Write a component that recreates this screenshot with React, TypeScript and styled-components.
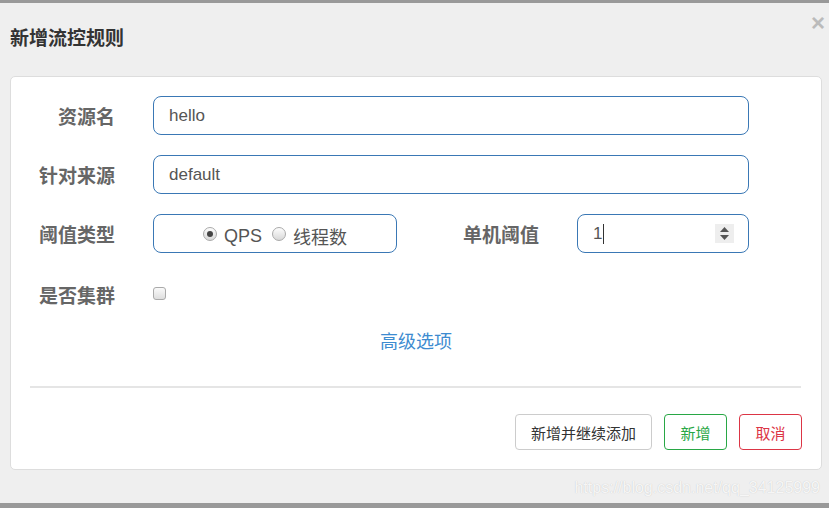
import React from "react";
import styled, { createGlobalStyle } from "styled-components";

const Global = createGlobalStyle`
  html, body { margin: 0; padding: 0; }
  body {
    background: #efefef;
    font-family: "Liberation Sans", "Noto Sans CJK SC", sans-serif;
  }
`;

const Page = styled.div`
  position: relative;
  height: 508px;
  box-sizing: border-box;
  border-top: 3px solid #999;
  border-bottom: 5px solid #999;
  background: #efefef;
  display: flex;
  flex-direction: column;
`;

const Header = styled.div`
  height: 73px;
  display: flex;
  justify-content: space-between;
  align-items: flex-start;
  padding: 0 4px 0 10px;
`;

const Title = styled.h4`
  margin: 22px 0 0;
  font-family: "Noto Sans CJK SC", sans-serif;
  font-size: 19px;
  font-weight: 700;
  color: #333;
  line-height: 24px;
`;

const Close = styled.span`
  margin-top: 8px;
  font-family: "Liberation Sans", sans-serif;
  font-size: 24px;
  font-weight: 700;
  color: #bbb;
  line-height: 24px;
`;

const Card = styled.div`
  margin: 0 7px 0 10px;
  height: 394px;
  box-sizing: border-box;
  background: #fff;
  border: 1px solid #ddd;
  border-radius: 5px;
  padding: 19px 0 0;
  display: flex;
  flex-direction: column;
`;

const Row = styled.div<{ $h?: number; $mb?: number }>`
  display: flex;
  align-items: center;
  height: ${(p) => p.$h ?? 39}px;
  margin-bottom: ${(p) => p.$mb ?? 20}px;
  padding-right: 72px;
`;

const Label = styled.label<{ $w?: number }>`
  width: ${(p) => p.$w ?? 104}px;
  flex: none;
  text-align: right;
  margin-right: 38px;
  font-family: "Noto Sans CJK SC", sans-serif;
  font-size: 19px;
  font-weight: 700;
  color: #666;
`;

const Input = styled.div<{ $w?: number }>`
  box-sizing: border-box;
  height: 39px;
  ${(p) => (p.$w ? `width: ${p.$w}px; flex: none;` : "flex: 1;")}
  border: 1px solid #3a78b5;
  border-radius: 8px;
  padding: 0 15px;
  display: flex;
  align-items: center;
  font-size: 17px;
  color: #555;
`;

const RadioBox = styled(Input)`
  justify-content: center;
  gap: 10px;
  padding-top: 5px;
`;

const RadioItem = styled.span`
  display: flex;
  align-items: center;
  gap: 7px;
  font-family: "Liberation Sans", "Noto Sans CJK SC", sans-serif;
  font-size: 18px;
  color: #555;
`;

const RadioDot = styled.span<{ $on?: boolean }>`
  width: 14px;
  height: 14px;
  box-sizing: border-box;
  border-radius: 50%;
  border: 1px solid #aaa;
  background: linear-gradient(#fdfdfd, #d8d8d8);
  display: flex;
  align-items: center;
  justify-content: center;
  margin-top: -4px;
  &::after {
    content: "";
    width: 6px;
    height: 6px;
    border-radius: 50%;
    background: ${(p) => (p.$on ? "#444" : "transparent")};
  }
`;

const Caret = styled.span`
  display: inline-block;
  width: 1px;
  height: 20px;
  background: #333;
  margin-left: 1px;
`;

const NumValue = styled.span`
  flex: 1;
  display: flex;
  align-items: center;
`;

const Spinner = styled.span`
  width: 19px;
  height: 19px;
  background: #eee;
  display: flex;
  align-items: center;
  justify-content: center;
  margin-right: -1px;
`;

const Checkbox = styled.span`
  width: 13px;
  height: 13px;
  box-sizing: border-box;
  border: 1px solid #aaa;
  border-radius: 3px;
  background: linear-gradient(#fafafa, #dedede);
  margin-top: -1px;
`;

const Advanced = styled.a`
  align-self: center;
  margin-top: 12px;
  font-family: "Noto Sans CJK SC", sans-serif;
  font-size: 18px;
  color: #3d8bd0;
  text-decoration: none;
  line-height: 26px;
`;

const Divider = styled.hr`
  margin: 33px 20px 0 19px;
  border: 0;
  height: 2px;
  background: #e5e5e5;
`;

const Footer = styled.div`
  display: flex;
  justify-content: flex-end;
  gap: 12px;
  margin: 26px 19px 0 0;
`;

const Btn = styled.button<{ $c: string; $b: string; $w: number }>`
  width: ${(p) => p.$w}px;
  height: 36px;
  background: #fff;
  border: 1px solid ${(p) => p.$b};
  border-radius: 4px;
  color: ${(p) => p.$c};
  font-family: "Noto Sans CJK SC", sans-serif;
  font-size: 15px;
  padding: 0;
`;

const Watermark = styled.div`
  position: absolute;
  right: 9px;
  bottom: 6px;
  font-family: "Liberation Sans", sans-serif;
  font-size: 16px;
  color: rgba(255, 255, 255, 0.85);
  text-shadow: 0 0 1px rgba(0, 0, 0, 0.2);
`;

const SpinIcon = () => (
  <svg width="11" height="15" viewBox="0 0 11 15">
    <path d="M5.5 1 L10 6 L1 6 Z" fill="#555" />
    <path d="M5.5 14 L10 9 L1 9 Z" fill="#555" />
  </svg>
);

export default function App() {
  return (
    <>
      <Global />
      <Page>
        <Header>
          <Title>新增流控规则</Title>
          <Close>×</Close>
        </Header>
        <Card>
          <Row>
            <Label>资源名</Label>
            <Input>hello</Input>
          </Row>
          <Row>
            <Label>针对来源</Label>
            <Input>default</Input>
          </Row>
          <Row>
            <Label>阈值类型</Label>
            <RadioBox $w={244}>
              <RadioItem>
                <RadioDot $on />
                QPS
              </RadioItem>
              <RadioItem>
                <RadioDot />
                线程数
              </RadioItem>
            </RadioBox>
            <Label $w={142}>单机阈值</Label>
            <Input>
              <NumValue>
                1<Caret />
              </NumValue>
              <Spinner>
                <SpinIcon />
              </Spinner>
            </Input>
          </Row>
          <Row $h={42} $mb={0}>
            <Label>是否集群</Label>
            <Checkbox />
          </Row>
          <Advanced>高级选项</Advanced>
          <Divider />
          <Footer>
            <Btn $w={137} $c="#333" $b="#ccc">新增并继续添加</Btn>
            <Btn $w={63} $c="#28a745" $b="#28a745">新增</Btn>
            <Btn $w={63} $c="#dc3545" $b="#dc3545">取消</Btn>
          </Footer>
        </Card>
        <Watermark>https://blog.csdn.net/qq_34125999</Watermark>
      </Page>
    </>
  );
}
